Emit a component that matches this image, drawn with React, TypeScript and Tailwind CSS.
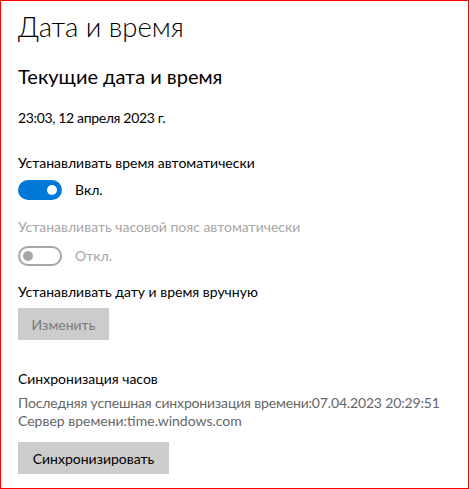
import React from "react";

function Toggle({ on }: { on: boolean }) {
  if (on) {
    return (
      <div className="w-[44px] h-[20px] rounded-full bg-[#0078d7] flex items-center justify-end pr-[5px]">
        <div className="w-[10px] h-[10px] rounded-full bg-white" />
      </div>
    );
  }
  return (
    <div className="w-[44px] h-[20px] rounded-full border-2 border-[#a6a6a6] flex items-center pl-[3px]">
      <div className="w-[10px] h-[10px] rounded-full bg-[#a6a6a6]" />
    </div>
  );
}

export default function App() {
  return (
    <div
      className="w-[469px] h-[489px] border border-[#ff0000] bg-white pl-[17px] text-black overflow-hidden"
      style={{ fontFamily: 'Lato, "Noto Sans", sans-serif' }}
    >
      <div className="pt-[8px] text-[27.5px] leading-[36px] font-light">Дата и время</div>
      <div className="mt-[17px] text-[20px] leading-[28px]">Текущие дата и время</div>
      <div className="mt-[18px] text-[14px] leading-[20px] tracking-[-0.35px]">23:03, 12 апреля 2023 г.</div>
      <div className="mt-[25px] text-[14px] leading-[20px]">Устанавливать время автоматически</div>
      <div className="mt-[7px] flex items-center gap-[13px]">
        <Toggle on />
        <span className="text-[14px] leading-[20px]">Вкл.</span>
      </div>
      <div className="mt-[17px] text-[14px] leading-[20px] text-[#a6a6a6]">
        Устанавливать часовой пояс автоматически
      </div>
      <div className="mt-[9px] flex items-center gap-[13px]">
        <Toggle on={false} />
        <span className="text-[14px] leading-[20px] text-[#a6a6a6]">Откл.</span>
      </div>
      <div className="mt-[16px] text-[14px] leading-[20px]">Устанавливать дату и время вручную</div>
      <div className="mt-[6px]">
        <div className="w-[91px] h-[32px] bg-[#cccccc] flex items-center justify-center text-[14px] text-[#7a7a7a]">
          Изменить
        </div>
      </div>
      <div className="mt-[29px] text-[14px] leading-[20px]">Синхронизация часов</div>
      <div className="mt-[5px] text-[14px] leading-[18px] text-[#666666]">
        <div className="tracking-[-0.16px]">Последняя успешная синхронизация времени:07.04.2023 20:29:51</div>
        <div>Сервер времени:time.windows.com</div>
      </div>
      <div className="mt-[12px]">
        <div className="w-[151px] h-[32px] bg-[#cccccc] flex items-center justify-center text-[14px]">
          Синхронизировать
        </div>
      </div>
    </div>
  );
}
